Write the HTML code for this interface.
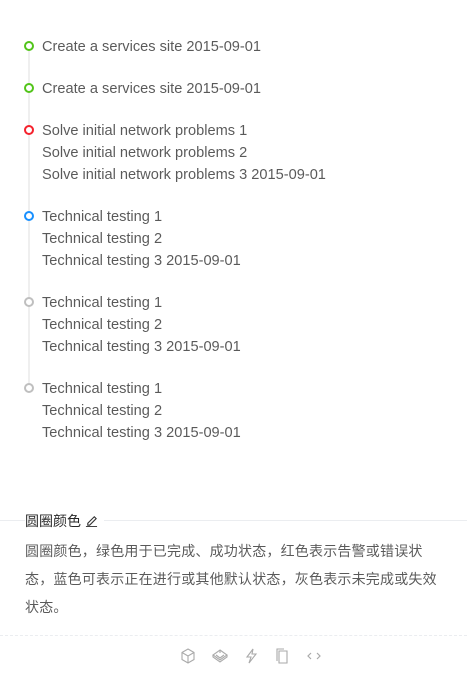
<!DOCTYPE html>
<html><head><meta charset="utf-8"><style>
*{margin:0;padding:0;box-sizing:border-box}
body{width:467px;height:676px;background:#fff;font-family:"Liberation Sans","Noto Sans CJK SC",sans-serif;color:rgba(0,0,0,.65);font-size:14px;position:relative;overflow:hidden}
.dot{position:absolute;left:24px;width:10px;height:10px;border-radius:50%;border:2px solid;background:#fff;z-index:2}
.tail{position:absolute;left:28px;width:2px;background:#efefef;z-index:1}
.txt{position:absolute;left:42px;line-height:22px;white-space:nowrap;font-size:14.6px}
.title{position:absolute;left:25px;top:511px;font-size:14px;color:rgba(0,0,0,.85);background:#fff;padding-right:6px;line-height:20px}
.hr{position:absolute;left:0;right:0;top:520px;border-top:1px solid #ebedf0}
.desc{position:absolute;left:25px;top:537px;width:440px;line-height:28px;font-size:14px;letter-spacing:0.2px;color:rgba(0,0,0,.65);white-space:nowrap}
.dash{position:absolute;left:0;right:0;top:635px;border-top:1px dashed #ebedf0}
.icons{position:absolute;top:648px;left:0;width:467px}
.icons svg{position:absolute;top:0}
</style></head><body>
<div class="tail" style="top:46px;height:342px"></div>

<div class="dot" style="top:41px;border-color:#52c41a"></div>
<div class="txt" style="top:36px">Create a services site 2015-09-01</div>

<div class="dot" style="top:83px;border-color:#52c41a"></div>
<div class="txt" style="top:78px">Create a services site 2015-09-01</div>

<div class="dot" style="top:125px;border-color:#f5222d"></div>
<div class="txt" style="top:120px">Solve initial network problems 1<br>Solve initial network problems 2<br>Solve initial network problems 3 2015-09-01</div>

<div class="dot" style="top:211px;border-color:#1890ff"></div>
<div class="txt" style="top:206px">Technical testing 1<br>Technical testing 2<br>Technical testing 3 2015-09-01</div>

<div class="dot" style="top:297px;border-color:#bfbfbf"></div>
<div class="txt" style="top:292px">Technical testing 1<br>Technical testing 2<br>Technical testing 3 2015-09-01</div>

<div class="dot" style="top:383px;border-color:#bfbfbf"></div>
<div class="txt" style="top:378px">Technical testing 1<br>Technical testing 2<br>Technical testing 3 2015-09-01</div>

<div class="hr"></div>
<div class="title">圆圈颜色 <svg width="13" height="13" viewBox="0 0 14 14" style="vertical-align:-1px"><path d="M3 10 L10 3 L12 5 L5 12 L3 12 Z" fill="none" stroke="#333" stroke-width="1.2"/><path d="M1 13.5 H13" stroke="#333" stroke-width="1"/></svg></div>
<div class="desc">圆圈颜色，绿色用于已完成、成功状态，红色表示告警或错误状<br>态，蓝色可表示正在进行或其他默认状态，灰色表示未完成或失效<br>状态。</div>
<div class="dash"></div>
<div class="icons">
<svg style="left:181px" width="14" height="16" viewBox="0 0 14 16" fill="none" stroke="#aaa" stroke-width="1.1"><path d="M7 1 L13 4.5 V11.5 L7 15 L1 11.5 V4.5 Z M1 4.5 L7 8 L13 4.5 M7 8 V15"/></svg>
<svg style="left:212px" width="16" height="16" viewBox="0 0 16 16" fill="none" stroke="#aaa" stroke-width="1.1"><path d="M8 2 L15 7 L8 12 L1 7 Z M1 7 V9 L8 14 L15 9 V7 M8 2 V5 M4 7 L8 10 L12 7"/></svg>
<svg style="left:244px" width="14" height="16" viewBox="0 0 14 16" fill="none" stroke="#aaa" stroke-width="1.1"><path d="M9 1 L3 9 H7 L5 15 L12 6 H8 Z"/></svg>
<svg style="left:275px" width="14" height="16" viewBox="0 0 14 16" fill="none" stroke="#aaa" stroke-width="1.1"><path d="M4 3 H12 V15 H4 Z M2 13 V1 H9"/></svg>
<svg style="left:305px" width="18" height="16" viewBox="0 0 18 16" fill="none" stroke="#aaa" stroke-width="1.2"><path d="M6 5 L3 8 L6 11 M12 5 L15 8 L12 11"/></svg>
</div>
</body></html>
